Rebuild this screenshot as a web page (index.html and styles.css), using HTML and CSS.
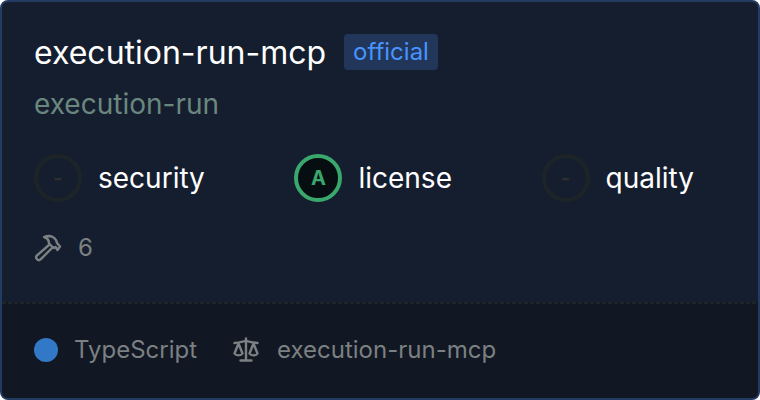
FILE: index.html
```html
<!DOCTYPE html>
<html lang="en">
<head>
<meta charset="UTF-8">
<meta name="viewport" content="width=device-width, initial-scale=1.0">
<title>execution-run-mcp</title>
<link rel="stylesheet" href="styles.css">
</head>
<body>

<div class="card">
    <div class="card-body">
        <div class="title-row">
            <h1>execution-run-mcp</h1>
            <span class="badge">official</span>
        </div>
        <div class="author">execution-run</div>
        <div class="scores">
            <div class="score">
                <span class="grade">-</span>
                <span>security</span>
            </div>
            <div class="score">
                <span class="grade grade-a">A</span>
                <span>license</span>
            </div>
            <div class="score">
                <span class="grade">-</span>
                <span>quality</span>
            </div>
        </div>
        <div class="meta">
            <svg class="icon" viewBox="0 0 28 28" aria-hidden="true">
                <path d="M15.5 10.5L2.8 21.6a2.7 2.7 0 0 0 3.8 3.8L18.5 13.5"/>
                <path d="M10 3C13.5 4 15 6 15 9.5L19.5 14L21.5 13L23.5 16L26 12.5L23 9C22.5 5 19 2.2 15.5 2C13.5 2 11.5 2.2 10 3Z"/>
            </svg>
            <span>6</span>
        </div>
    </div>
    <div class="card-footer">
        <div class="meta">
            <span class="dot"></span>
            <span>TypeScript</span>
        </div>
        <div class="meta">
            <svg class="icon" viewBox="0 0 28 28" aria-hidden="true">
                <path d="M13 2.5V24M7.5 24.5H18.5M1.5 7C6 6.5 10 6 13 4.5C16 6 20 6.5 24.5 7"/>
                <path d="M5.5 7.5L1.5 17.5C3 20 8 20 9.5 17.5ZM20.5 7.5L16.5 17.5C18 20 23 20 24.5 17.5Z"/>
            </svg>
            <span>execution-run-mcp</span>
        </div>
    </div>
</div>

</body>
</html>
```

FILE: styles.css
```css
* {
    box-sizing: border-box;
}
body {
    margin: 0;
    background-color: #fff;
    font-family: Inter, sans-serif;
    font-size: 28px;
    line-height: 36px;
    color: #fff;
}
.card {
    display: flex;
    flex-direction: column;
    min-height: 100vh;
    border: 2px solid #233a61;
    border-radius: 8px;
    background-color: #151e2e;
    overflow: hidden;
}
.card-body {
    flex: 1;
    padding: 32px;
}
.title-row {
    display: flex;
    align-items: flex-start;
    gap: 18px;
}
h1 {
    margin: 0;
    font-size: 32px;
    font-weight: 400;
    line-height: 38px;
}
.badge {
    padding: 0 9px;
    border-radius: 4px;
    background-color: #223659;
    color: #4794ff;
    font-size: 24px;
}
.author {
    margin-top: 14px;
    color: #6a877f;
}
.scores {
    display: flex;
    justify-content: space-between;
    margin-top: 32px;
    padding-right: 32px;
}
.score {
    display: flex;
    align-items: center;
    gap: 16px;
}
.grade {
    display: flex;
    align-items: center;
    justify-content: center;
    width: 48px;
    height: 48px;
    border: 4px solid #1c2427;
    border-radius: 50%;
    color: #2f2f2f;
    font-size: 20px;
    font-weight: 700;
}
.grade-a {
    border-color: #3aa76d;
    background-color: #060e11;
    color: #3aa76d;
}
.meta {
    display: flex;
    align-items: center;
    gap: 16px;
    color: #7b8082;
    font-size: 24px;
}
.card-body .meta {
    margin-top: 28px;
}
.icon {
    width: 28px;
    height: 28px;
    fill: none;
    stroke: currentColor;
    stroke-width: 2.4;
    stroke-linecap: round;
    stroke-linejoin: round;
}
.dot {
    width: 24px;
    height: 24px;
    border-radius: 50%;
    background-color: #3178c6;
}
.card-footer {
    display: flex;
    gap: 36px;
    padding: 30px 32px;
    background-color: #111723;
    /* dashed top line */
    background-image: repeating-linear-gradient(90deg, #1e2528 0 4px, #111723 4px 6px);
    background-size: 100% 2px;
    background-repeat: no-repeat;
}
```
